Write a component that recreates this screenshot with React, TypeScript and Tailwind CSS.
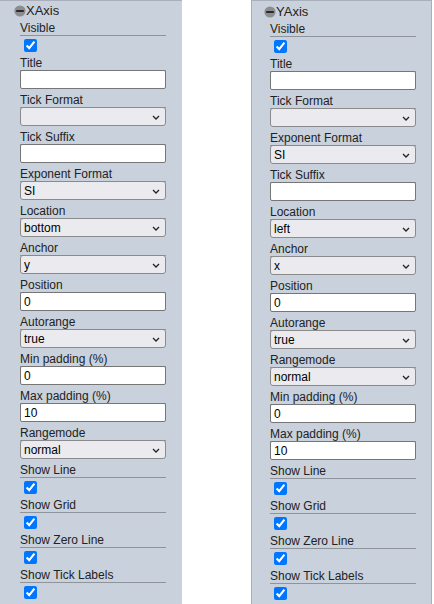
type Field =
	| { kind: "check"; label: string }
	| { kind: "text"; label: string; value: string }
	| { kind: "select"; label: string; value: string; options: string[] };

const xFields: Field[] = [
	{ kind: "check", label: "Visible" },
	{ kind: "text", label: "Title", value: "" },
	{ kind: "select", label: "Tick Format", value: "", options: [""] },
	{ kind: "text", label: "Tick Suffix", value: "" },
	{ kind: "select", label: "Exponent Format", value: "SI", options: ["SI", "none", "e", "E", "power"] },
	{ kind: "select", label: "Location", value: "bottom", options: ["bottom", "top"] },
	{ kind: "select", label: "Anchor", value: "y", options: ["y", "free"] },
	{ kind: "text", label: "Position", value: "0" },
	{ kind: "select", label: "Autorange", value: "true", options: ["true", "false"] },
	{ kind: "text", label: "Min padding (%)", value: "0" },
	{ kind: "text", label: "Max padding (%)", value: "10" },
	{ kind: "select", label: "Rangemode", value: "normal", options: ["normal", "tozero", "nonnegative"] },
	{ kind: "check", label: "Show Line" },
	{ kind: "check", label: "Show Grid" },
	{ kind: "check", label: "Show Zero Line" },
	{ kind: "check", label: "Show Tick Labels" },
];

const yFields: Field[] = [
	{ kind: "check", label: "Visible" },
	{ kind: "text", label: "Title", value: "" },
	{ kind: "select", label: "Tick Format", value: "", options: [""] },
	{ kind: "select", label: "Exponent Format", value: "SI", options: ["SI", "none", "e", "E", "power"] },
	{ kind: "text", label: "Tick Suffix", value: "" },
	{ kind: "select", label: "Location", value: "left", options: ["left", "right"] },
	{ kind: "select", label: "Anchor", value: "x", options: ["x", "free"] },
	{ kind: "text", label: "Position", value: "0" },
	{ kind: "select", label: "Autorange", value: "true", options: ["true", "false"] },
	{ kind: "select", label: "Rangemode", value: "normal", options: ["normal", "tozero", "nonnegative"] },
	{ kind: "text", label: "Min padding (%)", value: "0" },
	{ kind: "text", label: "Max padding (%)", value: "10" },
	{ kind: "check", label: "Show Line" },
	{ kind: "check", label: "Show Grid" },
	{ kind: "check", label: "Show Zero Line" },
	{ kind: "check", label: "Show Tick Labels" },
];

const MinusIcon = () => (
	<svg width="12" height="12" viewBox="0 0 12 12" className="shrink-0">
		<circle cx="6" cy="6" r="5.6" fill="#8b8d91" />
		<rect x="2.2" y="5" width="7.6" height="2" fill="#2a2a2a" />
	</svg>
);

const FieldRow = ({ field }: { field: Field }) => {
	if (field.kind === "check") {
		return (
			<div className="pt-[2px]">
				<div className="leading-[14px] border-b border-[#8f949c]">{field.label}</div>
				<input
					type="checkbox"
					defaultChecked
					className="block w-[13px] h-[13px] mt-[3px] mb-[2px] ml-[4px] accent-[#0075ff]"
				/>
			</div>
		);
	}
	return (
		<div className="pt-[2px] pb-[2px]">
			<div className="leading-[14px] border-b border-[#8f949c]">{field.label}</div>
			{field.kind === "text" ? (
				<input
					type="text"
					defaultValue={field.value}
					className="block w-full h-[19px] -mt-px px-[3px] bg-white border border-[#767676] rounded-[2px] text-[12px] text-black"
				/>
			) : (
				<div className="relative -mt-px">
					<select
						defaultValue={field.value}
						className="block w-full h-[19px] pl-[3px] appearance-none bg-[#ebebef] border border-[#8a8a8a] rounded-[3px] text-[12px] text-black"
					>
						{field.options.map((o) => (
							<option key={o} value={o}>
								{o}
							</option>
						))}
					</select>
					<svg
						width="8"
						height="5"
						viewBox="0 0 8 5"
						className="absolute right-[6px] top-[8px] pointer-events-none"
					>
						<path d="M1 1 L4 4 L7 1" fill="none" stroke="#222" strokeWidth="1.3" />
					</svg>
				</div>
			)}
		</div>
	);
};

const AxisPanel = ({ title, fields, className }: { title: string; fields: Field[]; className: string }) => (
	<div className={`h-[604px] overflow-hidden bg-[#c9d1dd] border-t border-[#a9b0bb] ${className}`}>
		<div className="flex items-center h-[18px] -ml-[6px] pt-px">
			<MinusIcon />
			<span className="leading-[14px] text-[13px]">{title}</span>
		</div>
		<div className="w-[146px]">
			{fields.map((f) => (
				<FieldRow key={f.label} field={f} />
			))}
		</div>
	</div>
);

export default function App() {
	return (
		<div
			className="flex gap-[69px] w-[434px] h-[604px] bg-white text-[12px] text-[#222]"
			style={{ fontFamily: '"Liberation Sans", Arial, sans-serif' }}
		>
			<AxisPanel title="XAxis" fields={xFields} className="w-[182px] pl-[20px]" />
			<AxisPanel
				title="YAxis"
				fields={yFields}
				className="w-[181px] pl-[18px] pt-px border-x border-x-[#a9b0bb]"
			/>
		</div>
	);
}
